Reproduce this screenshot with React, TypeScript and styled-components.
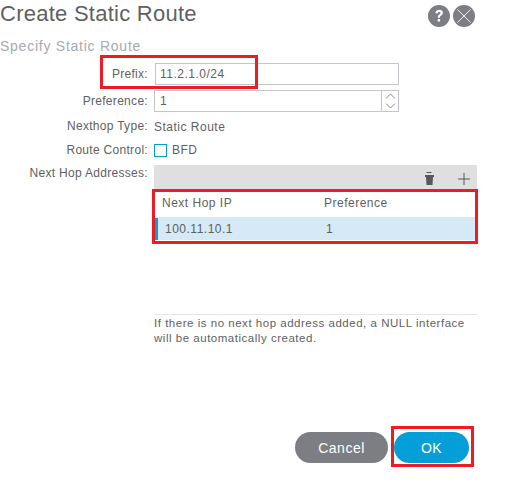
import React from 'react';
import styled, { createGlobalStyle } from 'styled-components';

const GlobalStyle = createGlobalStyle`
  html, body {
    margin: 0;
    padding: 0;
    background: #fff;
  }
  body {
    font-family: "Liberation Sans", Arial, sans-serif;
    color: #5f5f62;
  }
`;

const Page = styled.div`
  position: relative;
  width: 506px;
  height: 481px;
  overflow: hidden;
  background: #fff;
`;

const Header = styled.div`
  display: flex;
  justify-content: space-between;
  align-items: flex-start;
  height: 37px;
  padding-right: 31px;
`;

const Title = styled.h1`
  margin: 0;
  font-size: 22px;
  font-weight: 400;
  line-height: 28px;
  letter-spacing: 0.25px;
  color: #5f5f62;
`;

const HeaderIcons = styled.div`
  display: flex;
  gap: 3px;
  padding-top: 5px;
`;

const SubTitle = styled.h2`
  margin: 0;
  height: 23px;
  font-size: 14px;
  font-weight: 400;
  line-height: 18px;
  letter-spacing: 0.75px;
  color: #a9a9ad;
`;

const Form = styled.div`
  display: grid;
  grid-template-columns: 148px 323px;
  column-gap: 6px;
  align-items: center;
  font-size: 12px;
  letter-spacing: 0.5px;
`;

const Label = styled.div<{ $height: number }>`
  height: ${p => p.$height}px;
  line-height: ${p => p.$height}px;
  text-align: right;
  letter-spacing: 0.3px;
  color: #5f5f62;
`;

const Field = styled.div<{ $height: number }>`
  height: ${p => p.$height}px;
  display: flex;
  align-items: center;
`;

const InputBox = styled.div<{ $inset?: boolean }>`
  box-sizing: border-box;
  width: ${p => (p.$inset ? 244 : 245)}px;
  height: 22px;
  margin-left: ${p => (p.$inset ? 1 : 0)}px;
  display: flex;
  align-items: center;
  justify-content: space-between;
  padding-left: ${p => (p.$inset ? 4 : 5)}px;
  border: 1px solid #c4c4ca;
`;

const Spinner = styled.div`
  box-sizing: border-box;
  width: 17px;
  height: 20px;
  border-left: 1px solid #c4c4ca;
  display: flex;
  align-items: center;
  justify-content: center;
`;

const Check = styled.span`
  box-sizing: border-box;
  width: 13px;
  height: 13px;
  margin-right: 5px;
  border: 1px solid #049fd9;
`;

const TopAligned = styled(Label)`
  align-self: start;
  margin-top: 4px;
`;

const TableBlock = styled.div`
  grid-column: 2;
  width: 323px;
  margin-top: 4px;
`;

const Toolbar = styled.div`
  box-sizing: border-box;
  height: 26px;
  background: #dfdfdf;
  display: flex;
  align-items: flex-end;
  justify-content: flex-end;
  gap: 24px;
  padding: 0 7px 6px 0;
`;

const TableRow = styled.div<{ $selected?: boolean }>`
  box-sizing: border-box;
  height: ${p => (p.$selected ? 22 : 27)}px;
  display: grid;
  grid-template-columns: ${p => (p.$selected ? '161px 1fr' : '162px 1fr')};
  align-items: center;
  margin: 0 2px 0 1px;
  padding: 0 0 ${p => (p.$selected ? 1 : 2)}px 7px;
  background: ${p => (p.$selected ? '#d5e9f6' : '#fff')};
  border-left: ${p => (p.$selected ? '3px solid #049fd9' : 'none')};
  border-bottom: ${p => (p.$selected ? 'none' : '1px solid #e4e4e4')};
`;

const Note = styled.div`
  grid-column: 2;
  box-sizing: border-box;
  width: 323px;
  margin-top: 74px;
  padding-top: 1px;
  border-top: 1px solid #e6e6e6;
  font-size: 11.5px;
  line-height: 15px;
  letter-spacing: 0.52px;
`;

const Footer = styled.div`
  display: flex;
  justify-content: flex-end;
  gap: 6px;
  margin-top: 86px;
  padding-right: 37px;
`;

const Button = styled.button<{ $primary?: boolean }>`
  width: ${p => (p.$primary ? 75 : 93)}px;
  height: 31px;
  padding: 0;
  border: none;
  border-radius: 16px;
  background: ${p => (p.$primary ? '#049fd9' : '#7c7e84')};
  color: #fff;
  font-family: inherit;
  font-size: 14px;
  letter-spacing: 0.5px;
`;

const Highlight = styled.div<{ $x: number; $y: number; $w: number; $h: number }>`
  position: absolute;
  left: ${p => p.$x}px;
  top: ${p => p.$y}px;
  width: ${p => p.$w}px;
  height: ${p => p.$h}px;
  box-sizing: border-box;
  border: 3px solid #ed1c24;
  pointer-events: none;
`;

const HelpIcon = () => (
  <svg width="22" height="22" viewBox="0 0 22 22">
    <circle cx="11" cy="11" r="11" fill="#7c7e84" />
    <path d="M7.4 8.2c.1-2.2 1.6-3.4 3.8-3.4 2.2 0 3.7 1.2 3.7 3 0 1.3-.7 2-1.7 2.7-.9.6-1.2 1-1.2 2v.3H9.8v-.6c0-1.3.5-2 1.5-2.7.8-.5 1.2-.9 1.2-1.5 0-.7-.5-1.1-1.3-1.1-.9 0-1.4.5-1.5 1.4z" fill="#fff" />
    <rect x="9.7" y="14" width="2.4" height="2.5" fill="#fff" />
  </svg>
);

const CloseIcon = () => (
  <svg width="22" height="22" viewBox="0 0 22 22">
    <circle cx="11" cy="11" r="11" fill="#7c7e84" />
    <path d="M4.5 4.5l13 13M17.500 4.500l-13 13" stroke="#fff" strokeWidth="0.9" fill="none" />
  </svg>
);

const SpinnerArrows = () => (
  <svg width="11" height="16" viewBox="0 0 11 16">
    <path d="M1 5.500l4.500-4.500 4.500 4.500M1 10.500l4.500 4.500 4.500-4.500" stroke="#8b8b90" strokeWidth="1" fill="none" />
  </svg>
);

const TrashIcon = () => (
  <svg width="9" height="13" viewBox="0 0 9 13">
    <path d="M1.500 0.500h5" stroke="#58585b" strokeWidth="1" />
    <path d="M0 3h9v2h-1l-.5 8h-6l-.5-8h-1z" fill="#58585b" />
  </svg>
);

const PlusIcon = () => (
  <svg width="12" height="12" viewBox="0 0 12 12">
    <path d="M6 0v12M0 6h12" stroke="#58585b" strokeWidth="1" fill="none" />
  </svg>
);

const App: React.FC = () => (
  <Page>
    <GlobalStyle />
    <Header>
      <Title>Create Static Route</Title>
      <HeaderIcons>
        <HelpIcon />
        <CloseIcon />
      </HeaderIcons>
    </Header>
    <SubTitle>Specify Static Route</SubTitle>
    <Form>
      <Label $height={28}>Prefix:</Label>
      <Field $height={28}>
        <InputBox $inset>11.2.1.0/24</InputBox>
      </Field>
      <Label $height={26}>Preference:</Label>
      <Field $height={26}>
        <InputBox>
          1
          <Spinner>
            <SpinnerArrows />
          </Spinner>
        </InputBox>
      </Field>
      <Label $height={25}>Nexthop Type:</Label>
      <Field $height={25}>Static Route</Field>
      <Label $height={22}>Route Control:</Label>
      <Field $height={22}>
        <Check />
        BFD
      </Field>
      <TopAligned $height={16}>Next Hop Addresses:</TopAligned>
      <TableBlock>
        <Toolbar>
          <TrashIcon />
          <PlusIcon />
        </Toolbar>
        <TableRow>
          <span>Next Hop IP</span>
          <span>Preference</span>
        </TableRow>
        <TableRow $selected>
          <span>100.11.10.1</span>
          <span>1</span>
        </TableRow>
      </TableBlock>
      <Note>
        If there is no next hop address added, a NULL interface will be automatically created.
      </Note>
    </Form>
    <Footer>
      <Button>Cancel</Button>
      <Button $primary>OK</Button>
    </Footer>
    <Highlight $x={100} $y={55} $w={158} $h={34} />
    <Highlight $x={152} $y={189} $w={326} $h={55} />
    <Highlight $x={391} $y={426} $w={83} $h={41} />
  </Page>
);

export default App;
